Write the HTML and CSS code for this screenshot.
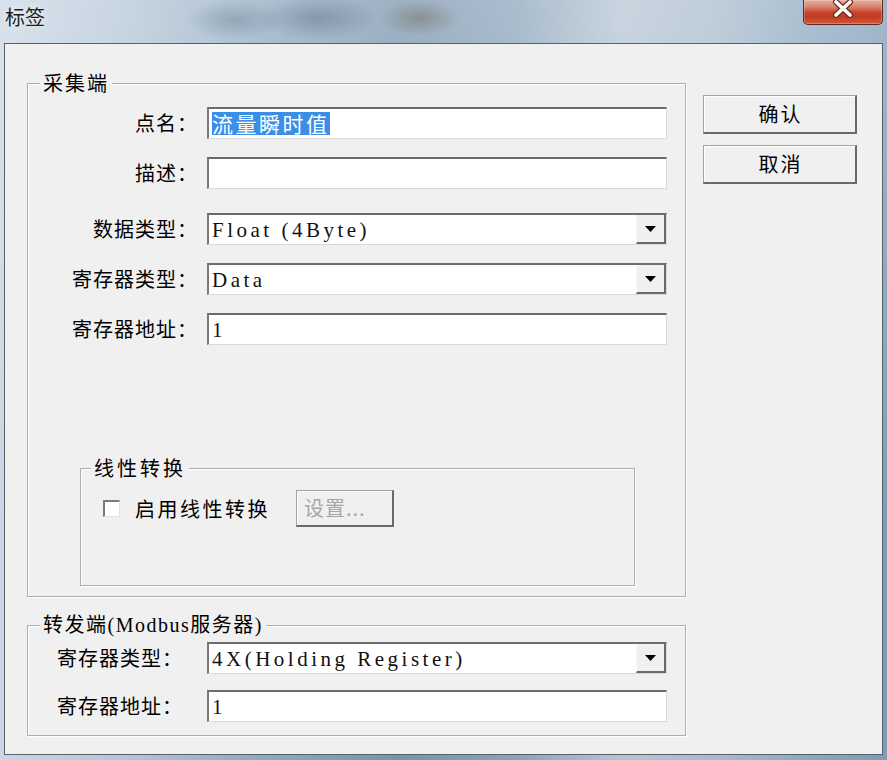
FILE: index.html
```html
<!DOCTYPE html>
<html lang="zh-CN">
<head>
<meta charset="utf-8">
<title>标签</title>
<link rel="stylesheet" href="styles.css">
</head>
<body>
<div class="window">
  <div class="titlebar">
    <span class="title">标签</span>
    <div class="close">
      <svg width="26" height="18" viewBox="0 0 26 18">
        <path d="M6 2 L20 15 M20 2 L6 15" stroke="#6b2a1e" stroke-width="6" stroke-linecap="round"/>
        <path d="M6 2 L20 15 M20 2 L6 15" stroke="#ffffff" stroke-width="3.6" stroke-linecap="round"/>
      </svg>
    </div>
  </div>
  <div class="client">
    <div class="main">
      <div class="group g-collect">
        <span class="legend">采集端</span>
        <div class="rows">
          <div class="row">
            <span class="lbl">点名：</span>
            <div class="field"><span class="sel">流量瞬时值</span></div>
          </div>
          <div class="row">
            <span class="lbl">描述：</span>
            <div class="field"></div>
          </div>
          <div class="row row-gap">
            <span class="lbl">数据类型：</span>
            <div class="field combo">
              <span class="val mono">Float (4Byte)</span>
              <span class="drop"><svg width="11" height="6" viewBox="0 0 11 6"><polygon points="0,0 11,0 5.5,6" fill="#000"/></svg></span>
            </div>
          </div>
          <div class="row">
            <span class="lbl">寄存器类型：</span>
            <div class="field combo">
              <span class="val mono">Data</span>
              <span class="drop"><svg width="11" height="6" viewBox="0 0 11 6"><polygon points="0,0 11,0 5.5,6" fill="#000"/></svg></span>
            </div>
          </div>
          <div class="row">
            <span class="lbl">寄存器地址：</span>
            <div class="field"><span class="val mono">1</span></div>
          </div>
        </div>
        <div class="group g-linear">
          <span class="legend legend-wide">线性转换</span>
          <div class="check-row">
            <span class="checkbox"></span>
            <span class="check-label">启用线性转换</span>
            <span class="btn btn-set">设置...</span>
          </div>
        </div>
      </div>
      <div class="group g-forward">
        <span class="legend legend-mixed">转发端(Modbus服务器)</span>
        <div class="rows rows-fwd">
          <div class="row">
            <span class="lbl lbl-left">寄存器类型：</span>
            <div class="field combo">
              <span class="val mono">4X(Holding Register)</span>
              <span class="drop"><svg width="11" height="6" viewBox="0 0 11 6"><polygon points="0,0 11,0 5.5,6" fill="#000"/></svg></span>
            </div>
          </div>
          <div class="row">
            <span class="lbl lbl-left">寄存器地址：</span>
            <div class="field"><span class="val mono">1</span></div>
          </div>
        </div>
      </div>
    </div>
    <div class="side">
      <span class="btn btn-main">确认</span>
      <span class="btn btn-main">取消</span>
    </div>
  </div>
</div>
</body>
</html>
```

FILE: styles.css
```css
* { box-sizing: border-box; }

body {
  margin: 0;
  width: 887px;
  height: 760px;
  overflow: hidden;
  font-family: "Noto Sans CJK SC", "Noto Sans", sans-serif;
  font-weight: 400;
  color: #000;
}

.window {
  height: 760px;
  display: flex;
  flex-direction: column;
  background:
    radial-gradient(ellipse 60px 22px at 318px 18px, rgba(70,90,110,0.35), rgba(70,90,110,0) 100%),
    radial-gradient(ellipse 50px 20px at 235px 20px, rgba(80,100,120,0.3), rgba(80,100,120,0) 100%),
    radial-gradient(ellipse 40px 18px at 420px 18px, rgba(95,85,50,0.35), rgba(95,85,50,0) 100%),
    linear-gradient(180deg, rgba(255,255,255,0.28) 0%, rgba(255,255,255,0) 70%),
    linear-gradient(90deg, #c9d7e4 0%, #b3c6d6 14%, #8ea8bf 30%, #7993ad 45%, #8aa3ba 58%, #b4c5d3 70%, #a9bccd 80%, #8aa6be 92%, #7f9cb6 100%);
}

.titlebar {
  height: 43px;
  flex: none;
  display: flex;
  justify-content: space-between;
  align-items: flex-start;
  padding-left: 5px;
}

.title {
  font-size: 20px;
  line-height: 22px;
  margin-top: 6px;
  color: #1d1d1d;
  text-shadow: 0 0 6px rgba(255,255,255,0.9);
}

.close {
  width: 80px;
  height: 25px;
  margin-right: 4px;
  border: 1px solid #5b2b22;
  border-top: none;
  border-radius: 0 0 5px 5px;
  background: linear-gradient(180deg, #e6ad9f 0%, #d98570 28%, #c6432a 52%, #c13b20 70%, #d2583b 100%);
  box-shadow: inset 0 0 0 1px rgba(255,255,255,0.25);
  display: flex;
  justify-content: center;
  align-items: flex-start;
}

.client {
  flex: 1;
  margin: 0 4px 5px 4px;
  border: 1px solid #56616c;
  background: #f0f0f0;
  display: flex;
  align-items: flex-start;
}

.main {
  margin-left: 22px;
  margin-top: 39px;
}

.group {
  position: relative;
  border: 1px solid #aeaeae;
  box-shadow: inset 1px 1px 0 #ffffff, 1px 1px 0 #ffffff;
}

.legend {
  position: absolute;
  top: -13px;
  left: 12px;
  padding: 0 3px;
  background: #f0f0f0;
  font-size: 20px;
  line-height: 24px;
  letter-spacing: 2px;
}

.legend-wide { left: 10px; letter-spacing: 3px; }

.legend-mixed {
  font-family: "Liberation Serif", "Noto Sans CJK SC", serif;
  letter-spacing: 1.5px;
}

.g-collect {
  width: 659px;
  height: 514px;
  padding-top: 23px;
}

.rows {
  display: flex;
  flex-direction: column;
  gap: 18px;
}

.row {
  display: flex;
  align-items: center;
  height: 32px;
}

.row-gap { margin-top: 6px; }

.lbl {
  width: 170px;
  margin-right: 9px;
  text-align: right;
  font-size: 20px;
  line-height: 24px;
  letter-spacing: 1px;
}

.lbl-left {
  width: 150px;
  margin-right: 0;
  text-align: left;
}

.field {
  width: 460px;
  height: 32px;
  background: #ffffff;
  border-top: 2px solid #6c6c6c;
  border-left: 2px solid #7a7a7a;
  border-right: 1px solid #d9d9d9;
  border-bottom: 1px solid #d9d9d9;
  display: flex;
  align-items: center;
  padding-left: 3px;
}

.sel {
  background: #3a8ee6;
  color: #ffffff;
  font-size: 21px;
  line-height: 23px;
  letter-spacing: 2.5px;
}

.val { flex: 1; }

.mono {
  font-family: "Liberation Serif", "Noto Sans CJK SC", serif;
  font-size: 21px;
  line-height: 24px;
  letter-spacing: 3.5px;
  color: #111;
}

.drop {
  align-self: stretch;
  width: 30px;
  background: #f0f0f0;
  border-left: 1px solid #fafafa;
  border-right: 2px solid #6a6a6a;
  border-bottom: 2px solid #6a6a6a;
  display: flex;
  justify-content: center;
  align-items: center;
}

.g-linear {
  margin: 123px 0 0 52px;
  width: 555px;
  height: 118px;
  padding: 21px 0 0 22px;
}

.check-row {
  display: flex;
  align-items: center;
  height: 37px;
}

.checkbox {
  width: 17px;
  height: 17px;
  background: #ffffff;
  border-top: 2px solid #7a7a7a;
  border-left: 2px solid #7a7a7a;
  border-right: 1px solid #e2e2e2;
  border-bottom: 1px solid #e2e2e2;
  margin-right: 15px;
}

.check-label {
  font-size: 20px;
  line-height: 24px;
  letter-spacing: 2.5px;
  margin-right: 26px;
}

.btn {
  display: flex;
  align-items: center;
  background: #f0f0f0;
  border-top: 1px solid #a3a3a3;
  border-left: 1px solid #a3a3a3;
  border-right: 2px solid #6a6a6a;
  border-bottom: 2px solid #6a6a6a;
  box-shadow: inset 1px 1px 0 #ffffff;
  font-size: 20px;
  line-height: 24px;
}

.btn-set {
  width: 98px;
  height: 37px;
  padding-left: 7px;
  color: #a6a6a6;
  letter-spacing: 1px;
}

.g-forward {
  margin-top: 28px;
  width: 659px;
  height: 111px;
  padding: 16px 0 0 29px;
}

.rows-fwd { gap: 16px; }

.side {
  margin-left: 17px;
  margin-top: 51px;
  display: flex;
  flex-direction: column;
  gap: 11px;
}

.btn-main {
  width: 154px;
  height: 39px;
  justify-content: center;
  letter-spacing: 2px;
  padding-left: 2px;
}
```
